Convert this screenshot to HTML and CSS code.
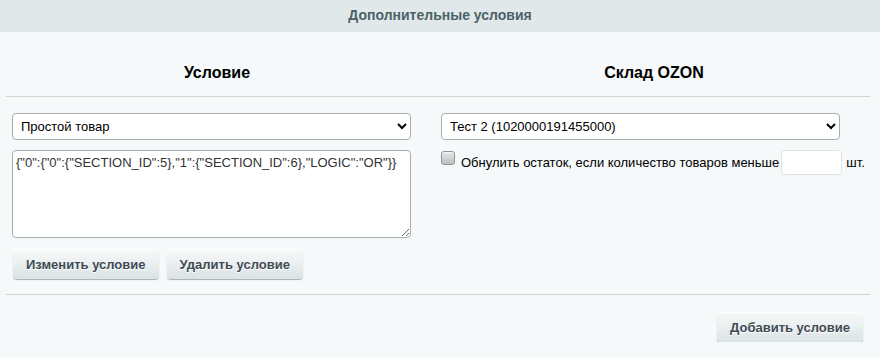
FILE: index.html
```html
<!DOCTYPE html>
<html>
<head>
    <title>Дополнительные условия</title>
    <link rel="stylesheet" href="styles.css">
</head>
<body>
    <div class="panel-head">Дополнительные условия</div>
    <div class="panel">
        <div class="cols heads">
            <div class="col left"><h3>Условие</h3></div>
            <div class="col right"><h3>Склад OZON</h3></div>
        </div>
        <hr class="sep">
        <div class="cols">
            <div class="col left">
                <select class="field">
                    <option>Простой товар</option>
                </select>
                <textarea class="cond">{"0":{"0":{"SECTION_ID":5},"1":{"SECTION_ID":6},"LOGIC":"OR"}}</textarea>
                <div class="btns">
                    <button class="btn">Изменить условие</button>
                    <button class="btn">Удалить условие</button>
                </div>
            </div>
            <div class="col right">
                <select class="field">
                    <option>Тест 2 (1020000191455000)</option>
                </select>
                <label class="check-row">
                    <span class="checkbox"></span>
                    Обнулить остаток, если количество товаров меньше
                    <input type="text" class="qty">
                    шт.
                </label>
            </div>
        </div>
        <hr class="sep bottom">
        <div class="foot">
            <button class="btn">Добавить условие</button>
        </div>
    </div>
</body>
</html>
```

FILE: styles.css
```css
body {
    margin: 0;
    font-family: Arial, "Liberation Sans", sans-serif;
    font-size: 13px;
    background: #f5f9f9;
    color: #000;
}
.panel-head {
    height: 32px;
    line-height: 31px;
    background: #e0e8ea;
    color: #4b6267;
    font-size: 14px;
    font-weight: bold;
    text-align: center;
}
.cols {
    display: grid;
    grid-template-columns: 436px 1fr;
}
.col.left { padding: 0 26px 0 12px; }
.col.right { padding: 0 40px 0 5px; }
.heads .col.right { padding: 0 8px 0 0; }
.heads h3 {
    margin: 0;
    height: 64px;
    line-height: 82px;
    font-size: 16px;
    text-align: center;
}
.heads .col.left h3 { margin-right: -12px; }
.sep {
    margin: 0 10px 16px 6px;
    border: none;
    border-top: 1px solid #d3d3d3;
    height: 0;
}
.sep.bottom { margin: 15px 10px 17px 6px; }
.field {
    display: block;
    width: 399px;
    height: 27px;
    padding: 0 4px;
    border: 1px solid #a7aeb1;
    border-radius: 4px;
    background: #fff;
    font-family: inherit;
    font-size: 13px;
    color: #000;
}
.cond {
    display: block;
    box-sizing: border-box;
    width: 399px;
    height: 88px;
    margin-top: 10px;
    padding: 4px 3px;
    border: 1px solid #a7aeb1;
    border-radius: 4px;
    font-family: inherit;
    font-size: 13px;
    color: #333;
    resize: vertical;
}
.btns {
    display: flex;
    gap: 8px;
    margin-top: 11px;
    padding-left: 1px;
}
.btn {
    height: 30px;
    padding: 0 13px;
    border: none;
    border-radius: 4px;
    background: linear-gradient(#f8fafa, #dbe3e4);
    box-shadow: 0 1px 1px rgba(0, 0, 0, 0.3), inset 0 1px 0 #fff;
    font-family: inherit;
    font-size: 13px;
    font-weight: bold;
    color: #3f4b54;
    text-shadow: 0 1px #fff;
}
.check-row {
    display: flex;
    align-items: center;
    margin-top: 10px;
    white-space: nowrap;
}
.checkbox {
    box-sizing: border-box;
    width: 14px;
    height: 14px;
    margin: 1px 6px 0 0;
    border: 1px solid #8e9598;
    border-radius: 3px;
    background: linear-gradient(#e6e8e8, #b9bebf);
    box-shadow: inset 0 1px 0 #f4f5f5;
    align-self: flex-start;
}
.qty {
    box-sizing: border-box;
    width: 61px;
    height: 25px;
    margin: 0 4px 0 2px;
    border: 1px solid #dfe3e4;
    border-radius: 4px;
    background: #fff;
}
.foot {
    display: flex;
    justify-content: flex-end;
    padding-right: 17px;
}
```
